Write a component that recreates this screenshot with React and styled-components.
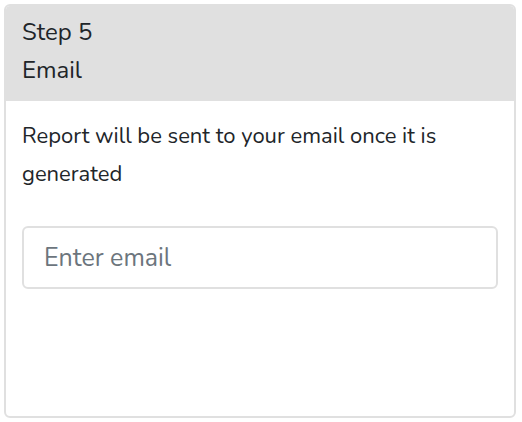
import React from 'react';
import styled, { createGlobalStyle } from 'styled-components';

const GlobalStyle = createGlobalStyle`
  body {
    margin: 0;
    background: #fff;
    font-family: Nunito, Lato, "Liberation Sans", sans-serif;
    color: #212529;
  }
`;

const Page = styled.div`
  padding: 4px;
`;

const Card = styled.div`
  width: 512px;
  height: 414px;
  box-sizing: border-box;
  border: 2px solid #e0e0e0;
  border-radius: 6px;
  overflow: hidden;
  display: flex;
  flex-direction: column;
`;

const Header = styled.div`
  background: #e0e0e0;
  padding: 7px 16px 12px;
`;

const HeaderLine = styled.div`
  font-size: 24px;
  line-height: 38px;
`;

const Body = styled.div`
  padding: 16px;
`;

const Text = styled.p`
  margin: 0 0 33px;
  font-size: 22px;
  line-height: 38px;
`;

const EmailInput = styled.input`
  display: block;
  width: 100%;
  height: 63px;
  box-sizing: border-box;
  border: 2px solid #e0e0e0;
  border-radius: 6px;
  padding: 0 20px;
  font-family: inherit;
  font-size: 25px;
  color: #495057;
  outline: none;

  &::placeholder {
    color: #6c757d;
  }
`;

export default function App() {
  return (
    <Page>
      <GlobalStyle />
      <Card>
        <Header>
          <HeaderLine>Step 5</HeaderLine>
          <HeaderLine>Email</HeaderLine>
        </Header>
        <Body>
          <Text>Report will be sent to your email once it is generated</Text>
          <EmailInput type="email" placeholder="Enter email" />
        </Body>
      </Card>
    </Page>
  );
}
